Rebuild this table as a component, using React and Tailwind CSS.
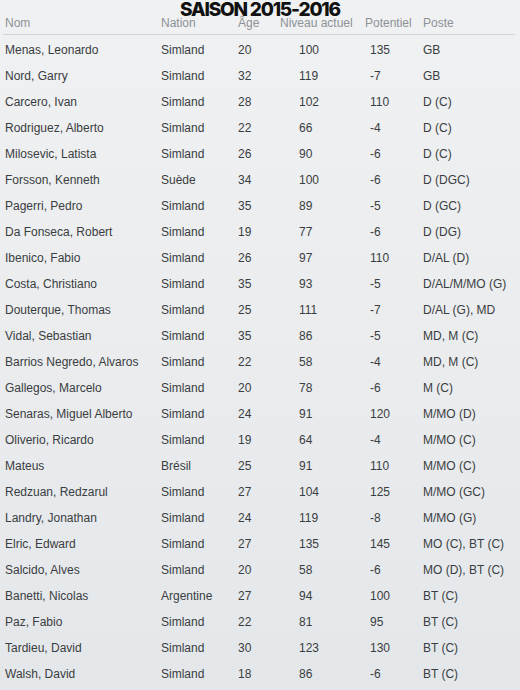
const players = [
  ["Menas, Leonardo", "Simland", "20", "100", "135", "GB"],
  ["Nord, Garry", "Simland", "32", "119", "-7", "GB"],
  ["Carcero, Ivan", "Simland", "28", "102", "110", "D (C)"],
  ["Rodriguez, Alberto", "Simland", "22", "66", "-4", "D (C)"],
  ["Milosevic, Latista", "Simland", "26", "90", "-6", "D (C)"],
  ["Forsson, Kenneth", "Suède", "34", "100", "-6", "D (DGC)"],
  ["Pagerri, Pedro", "Simland", "35", "89", "-5", "D (GC)"],
  ["Da Fonseca, Robert", "Simland", "19", "77", "-6", "D (DG)"],
  ["Ibenico, Fabio", "Simland", "26", "97", "110", "D/AL (D)"],
  ["Costa, Christiano", "Simland", "35", "93", "-5", "D/AL/M/MO (G)"],
  ["Douterque, Thomas", "Simland", "25", "111", "-7", "D/AL (G), MD"],
  ["Vidal, Sebastian", "Simland", "35", "86", "-5", "MD, M (C)"],
  ["Barrios Negredo, Alvaros", "Simland", "22", "58", "-4", "MD, M (C)"],
  ["Gallegos, Marcelo", "Simland", "20", "78", "-6", "M (C)"],
  ["Senaras, Miguel Alberto", "Simland", "24", "91", "120", "M/MO (D)"],
  ["Oliverio, Ricardo", "Simland", "19", "64", "-4", "M/MO (C)"],
  ["Mateus", "Brésil", "25", "91", "110", "M/MO (C)"],
  ["Redzuan, Redzarul", "Simland", "27", "104", "125", "M/MO (GC)"],
  ["Landry, Jonathan", "Simland", "24", "119", "-8", "M/MO (G)"],
  ["Elric, Edward", "Simland", "27", "135", "145", "MO (C), BT (C)"],
  ["Salcido, Alves", "Simland", "20", "58", "-6", "MO (D), BT (C)"],
  ["Banetti, Nicolas", "Argentine", "27", "94", "100", "BT (C)"],
  ["Paz, Fabio", "Simland", "22", "81", "95", "BT (C)"],
  ["Tardieu, David", "Simland", "30", "123", "130", "BT (C)"],
  ["Walsh, David", "Simland", "18", "86", "-6", "BT (C)"],
];

const cols = "grid grid-cols-[156px_75px_63px_71px_53px_1fr]";

const App = () => {
  return (
    <div className="w-[520px] h-[690px] overflow-hidden bg-gradient-to-b from-[#f0f1f2] to-[#e4e7ea] font-['Liberation_Sans',Arial,sans-serif]">
      <div className="h-[17px] flex justify-center pt-[2px]">
        <h1 className="text-[19px] leading-[15px] font-extrabold tracking-[-1.2px] text-[#111] font-['Inter',sans-serif]">
          SAISON 2015-2016
        </h1>
      </div>

      <div className="mx-[3px] mr-[5px] border-b border-[#d2d5d8] pb-[5px]">
        <div className={`${cols} h-[12px] leading-[12px] items-center pl-[2px] text-[12px] text-[#8c9196]`}>
          <span>Nom</span>
          <span>Nation</span>
          <span className="pl-[2px]">Âge</span>
          <span className="-ml-[19px] whitespace-nowrap">Niveau actuel</span>
          <span className="-ml-[5px]">Potentiel</span>
          <span>Poste</span>
        </div>
      </div>

      <div className="pt-[2px] px-[3px]">
        {players.map((p) => (
          <div
            key={p[0]}
            className={`${cols} h-[26px] items-center pl-[2px] text-[12px] text-[#3a3d41]`}
          >
            <span className="whitespace-nowrap">{p[0]}</span>
            <span>{p[1]}</span>
            <span className="pl-[2px]">{p[2]}</span>
            <span>{p[3]}</span>
            <span>{p[4]}</span>
            <span className="whitespace-nowrap">{p[5]}</span>
          </div>
        ))}
      </div>
    </div>
  );
};

export default App;
